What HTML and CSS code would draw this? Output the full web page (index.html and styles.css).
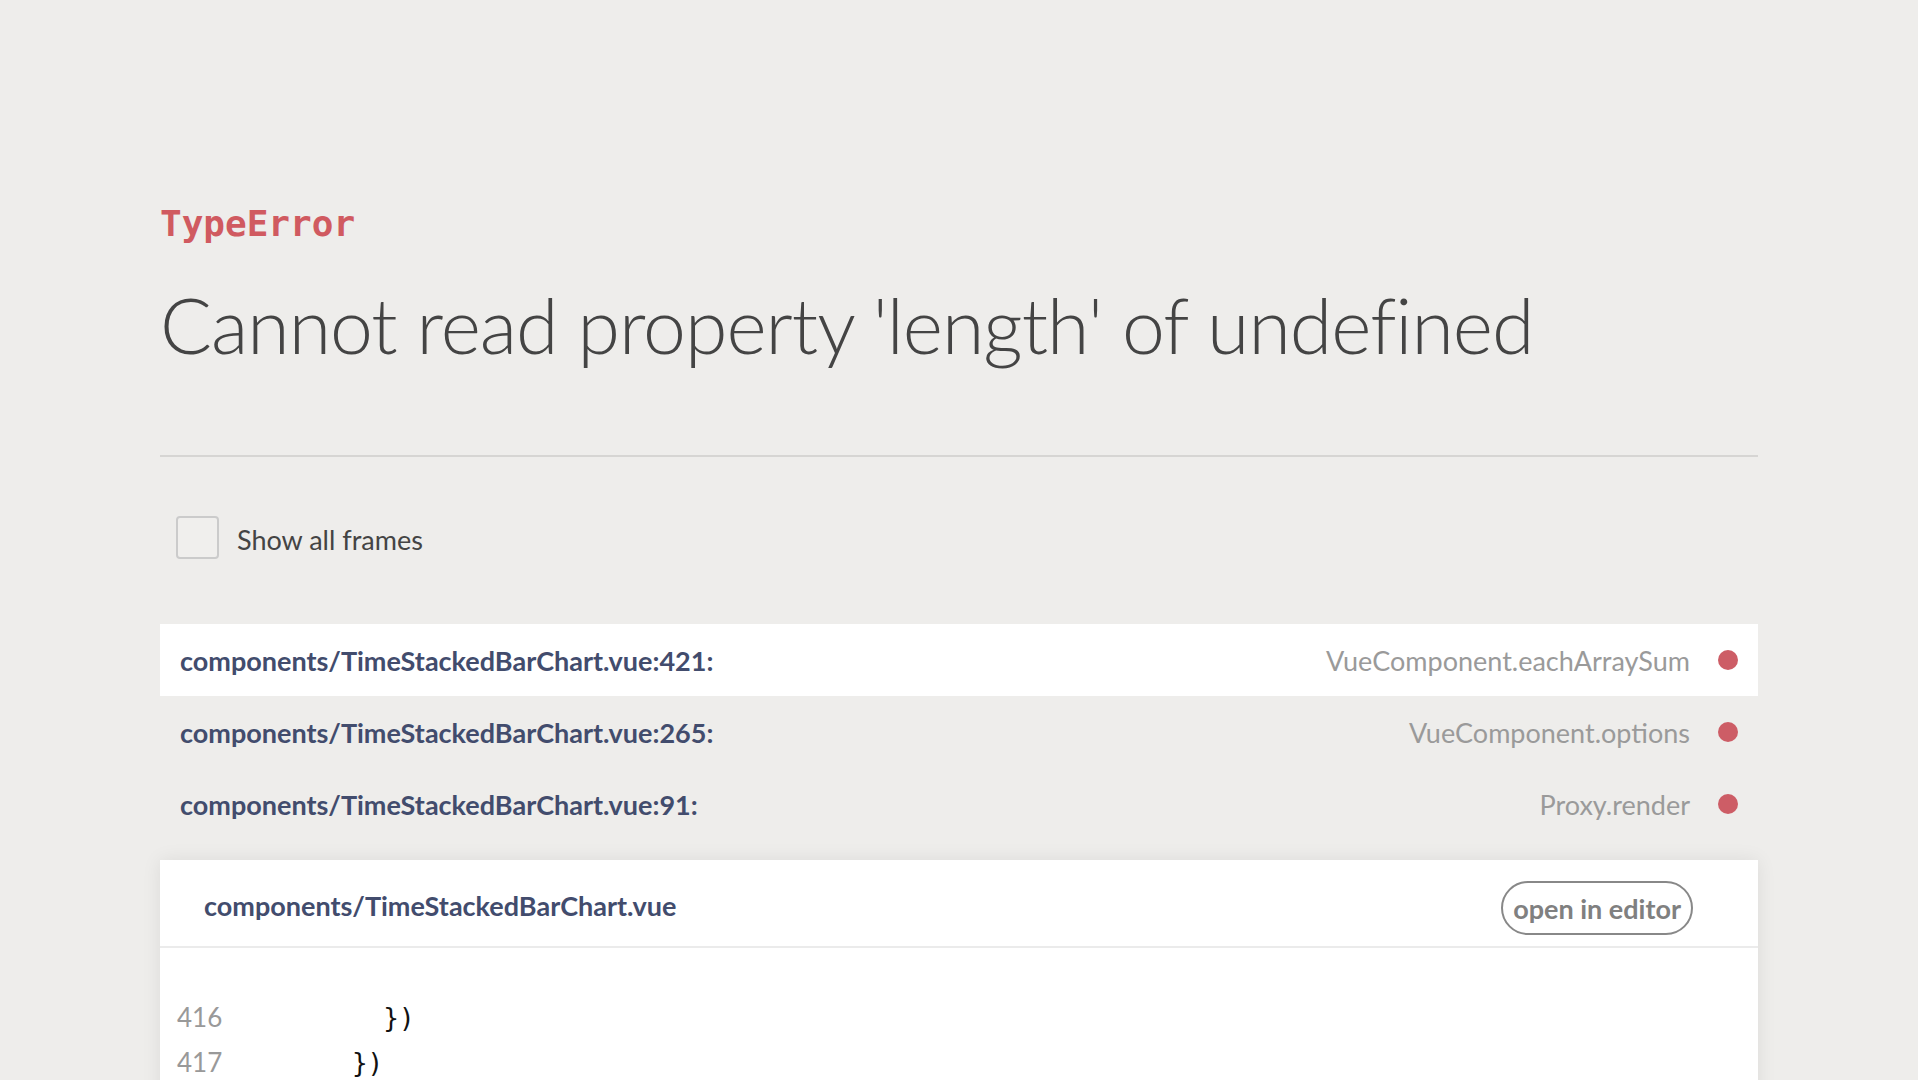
FILE: index.html
```html
<!DOCTYPE html>
<html lang="en">
<head>
<meta charset="utf-8">
<title>TypeError</title>
<link rel="stylesheet" href="styles.css">
</head>
<body>
<main class="page">
  <div class="error-type">TypeError</div>
  <h1 class="error-message">Cannot read property 'length' of undefined</h1>
  <hr class="divider">
  <label class="toggle">
    <span class="checkbox"></span>
    <span class="toggle-label">Show all frames</span>
  </label>
  <div class="frames">
    <div class="frame active">
      <span class="frame-file">components/TimeStackedBarChart.vue:421:</span>
      <span class="frame-method">VueComponent.eachArraySum</span>
      <span class="frame-dot"></span>
    </div>
    <div class="frame">
      <span class="frame-file">components/TimeStackedBarChart.vue:265:</span>
      <span class="frame-method">VueComponent.options</span>
      <span class="frame-dot"></span>
    </div>
    <div class="frame">
      <span class="frame-file">components/TimeStackedBarChart.vue:91:</span>
      <span class="frame-method">Proxy.render</span>
      <span class="frame-dot"></span>
    </div>
  </div>
  <section class="panel">
    <div class="panel-head">
      <span class="panel-file">components/TimeStackedBarChart.vue</span>
      <button class="editor-btn" type="button">open in editor</button>
    </div>
    <div class="code">
      <div class="line"><span class="ln">416</span><span class="src">        })</span></div>
      <div class="line"><span class="ln">417</span><span class="src">      })</span></div>
      <div class="line"><span class="ln">418</span><span class="src">      return sum</span></div>
      <div class="line"><span class="ln">419</span><span class="src">    },</span></div>
    </div>
  </section>
</main>
</body>
</html>
```

FILE: styles.css
```css
html, body {
  margin: 0;
  padding: 0;
}

body {
  background: #eeedeb;
  font-family: "Lato", "Open Sans", sans-serif;
  color: #444;
}

.page {
  padding: 206px 160px 60px;
}

.error-type {
  font-family: "DejaVu Sans Mono", monospace;
  font-weight: bold;
  font-size: 36px;
  line-height: 36px;
  color: #d05a60;
}

.error-message {
  margin: 36px 0 0;
  font-weight: 300;
  font-size: 77px;
  line-height: 92px;
  color: #444;
  letter-spacing: -1px;
}

.divider {
  margin: 85px 0 0;
  border: 0;
  height: 2px;
  background: #d6d5d3;
}

.toggle {
  display: flex;
  align-items: center;
  gap: 18px;
  margin: 59px 0 0 16px;
}

.checkbox {
  width: 39px;
  height: 39px;
  border: 2px solid #cbcbcb;
  border-radius: 4px;
  background: #f0efed;
}

.toggle-label {
  font-size: 27px;
  color: #444;
  padding-top: 4px;
}

.frames {
  margin-top: 65px;
}

.frame {
  display: flex;
  align-items: center;
  height: 72px;
  padding: 0 20px;
}

.frame.active {
  background: #fff;
}

.frame-file {
  font-size: 27px;
  font-weight: bold;
  color: #424c6d;
  flex: 1;
}

.frame-method {
  font-size: 27px;
  color: #9a9a9a;
}

.frame-dot {
  width: 20px;
  height: 20px;
  border-radius: 50%;
  background: #cd5d66;
  margin-left: 28px;
}

.panel {
  margin-top: 20px;
  background: #fff;
  box-shadow: 0 0 18px rgba(0, 0, 0, 0.08);
}

.panel-head {
  display: flex;
  align-items: center;
  justify-content: space-between;
  height: 86px;
  padding: 0 65px 0 44px;
  border-bottom: 2px solid #ebebeb;
}

.panel-file {
  font-size: 27px;
  font-weight: bold;
  color: #424c6d;
  padding-top: 4px;
}

.editor-btn {
  height: 54px;
  padding: 0 10px;
  border: 2px solid #888;
  border-radius: 27px;
  background: #fff;
  font-family: "Lato", "Open Sans", sans-serif;
  font-size: 27px;
  font-weight: bold;
  color: #808080;
  margin-top: 10px;
}

.code {
  padding: 47px 0 20px 17px;
}

.line {
  display: flex;
  align-items: baseline;
  height: 45px;
}

.ln {
  width: 81px;
  font-size: 26px;
  color: #999;
  line-height: 45px;
}

.src {
  font-family: "DejaVu Sans Mono", monospace;
  font-size: 26px;
  line-height: 45px;
  white-space: pre;
  color: #111;
}
```
